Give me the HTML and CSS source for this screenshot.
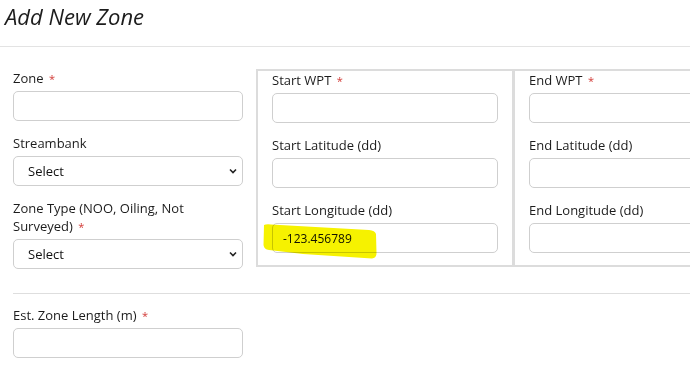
FILE: index.html
```html
<!DOCTYPE html>
<html lang="en">
<head>
    <meta charset="UTF-8">
    <meta name="viewport" content="width=device-width, initial-scale=1.0">
    <title>Add New Zone</title>
    <link rel="stylesheet" href="styles.css">
</head>
<body>
    <div class="page-header">
        <h1>Add New Zone</h1>
    </div>

    <form class="zone-form">
        <div class="form-row">
            <!-- 左侧字段 -->
            <div class="col-left">
                <div class="field">
                    <label for="zone">Zone <span class="req">*</span></label>
                    <input type="text" id="zone">
                </div>
                <div class="field">
                    <label for="streambank">Streambank</label>
                    <select id="streambank"><option>Select</option></select>
                </div>
                <div class="field">
                    <label for="zone-type">Zone Type (NOO, Oiling, Not Surveyed) <span class="req">*</span></label>
                    <select id="zone-type"><option>Select</option></select>
                </div>
            </div>

            <!-- 起点 / 终点 -->
            <div class="point-box">
                <div class="point-col">
                    <div class="field">
                        <label for="start-wpt">Start WPT <span class="req">*</span></label>
                        <input type="text" id="start-wpt">
                    </div>
                    <div class="field">
                        <label for="start-lat">Start Latitude (dd)</label>
                        <input type="text" id="start-lat">
                    </div>
                    <div class="field">
                        <label for="start-lon">Start Longitude (dd)</label>
                        <div class="hl-wrap">
                            <input type="text" id="start-lon" value="-123.456789">
                            <svg class="marker" width="116" height="36" viewBox="0 0 116 36">
                                <path d="M1 1 Q 3 0 8 0.5 L 106 6 Q 112 6.5 113 10 L 113.5 29 Q 113.5 34 109 34.5 L 40 30 L 6 26 Q 1 25.5 0.5 21 Z" fill="#f6f200"/>
                            </svg>
                        </div>
                    </div>
                </div>
                <div class="point-col">
                    <div class="field">
                        <label for="end-wpt">End WPT <span class="req">*</span></label>
                        <input type="text" id="end-wpt">
                    </div>
                    <div class="field">
                        <label for="end-lat">End Latitude (dd)</label>
                        <input type="text" id="end-lat">
                    </div>
                    <div class="field">
                        <label for="end-lon">End Longitude (dd)</label>
                        <input type="text" id="end-lon">
                    </div>
                </div>
            </div>
        </div>

        <hr class="divider">

        <div class="col-left">
            <div class="field">
                <label for="zone-length">Est. Zone Length (m) <span class="req">*</span></label>
                <input type="text" id="zone-length">
            </div>
        </div>
    </form>
</body>
</html>
```

FILE: styles.css
```css
body {
    font-family: "Open Sans", "Noto Sans", sans-serif;
    margin: 0;
    padding: 0;
    background-color: #fff;
    color: #1c1c1c;
    overflow: hidden;
}
.page-header {
    height: 46px;
    border-bottom: 1px solid #e3e3e3;
    padding-left: 5px;
}
h1 {
    margin: 0;
    padding-top: 2px;
    font-size: 22px;
    font-weight: normal;
    font-style: italic;
    line-height: 28px;
    color: #1c1c1c;
}
.zone-form {
    padding: 22px 0 0 13px;
}
.form-row {
    display: flex;
    align-items: flex-start;
    gap: 13px;
}
.col-left {
    width: 230px;
    flex-shrink: 0;
}
.field {
    display: flex;
    flex-direction: column;
    margin-bottom: 13px;
}
label {
    font-size: 13px;
    line-height: 18px;
    margin-bottom: 4px;
    color: #1c1c1c;
}
.req {
    display: inline-block;
    color: #d23a36;
    font-size: 11px;
    line-height: 11px;
    margin-left: 2px;
}
input[type="text"], select {
    box-sizing: border-box;
    width: 100%;
    height: 30px;
    border: 1px solid #cfcfcf;
    border-radius: 5px;
    background-color: #fff;
    font-family: inherit;
    font-size: 12px;
    color: #111;
    padding: 0 10px;
    margin: 0;
}
select {
    appearance: none;
    -webkit-appearance: none;
    padding-left: 14px;
    font-size: 13px;
    background-image: url("data:image/svg+xml,%3Csvg xmlns='http://www.w3.org/2000/svg' width='8' height='6' viewBox='0 0 8 6'%3E%3Cpath d='M1 1.5 L4 4.5 L7 1.5' fill='none' stroke='%23222' stroke-width='1.6'/%3E%3C/svg%3E");
    background-repeat: no-repeat;
    background-position: right 5px center;
}
/* 起点终点框 */
.point-box {
    display: flex;
    border: 2px solid #dcdcdc;
    border-right: none;
    flex-shrink: 0;
}
.point-col {
    width: 226px;
    padding: 0 14px;
}
.point-col + .point-col {
    border-left: 3px solid #dcdcdc;
}
.point-col .field:last-child {
    margin-bottom: 12px;
}
.hl-wrap {
    position: relative;
}
.marker {
    position: absolute;
    left: -9px;
    top: 1px;
    mix-blend-mode: multiply;
    pointer-events: none;
}
.divider {
    border: none;
    border-top: 1px solid #dedede;
    margin: 11px 0 12px 0;
}
```
